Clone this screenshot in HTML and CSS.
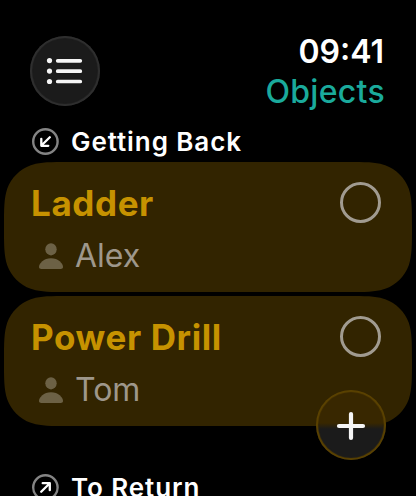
FILE: index.html
```
<!DOCTYPE html>
<html lang="en">
<head>
    <meta charset="UTF-8">
    <title>Objects</title>
    <link rel="stylesheet" href="styles.css">
</head>
<body>
    <div class="screen">
        <div class="header">
            <button class="round-btn" aria-label="Lists">
                <svg width="70" height="70" viewBox="0 0 70 70">
                    <g fill="#f5f5f5">
                        <circle cx="19.5" cy="24.6" r="2.6"/>
                        <circle cx="19.5" cy="35.1" r="2.6"/>
                        <circle cx="19.5" cy="45.5" r="2.6"/>
                    </g>
                    <path d="M27.7 24.8H50.3M27.7 35.2H50.3M27.7 45.5H50.3" stroke="#f5f5f5" stroke-width="3.7" stroke-linecap="round"/>
                </svg>
            </button>
            <div class="status">
                <div class="time">09:41</div>
                <div class="title">Objects</div>
            </div>
        </div>

        <div class="section-title">
            <svg width="27" height="27" viewBox="0 0 27 27" fill="none">
                <circle cx="13.4" cy="13.5" r="12.2" stroke="#848484" stroke-width="2.4"/>
                <path d="M17.8 9.2L9.7 17.3M9.3 10.8V17.8H16.3" stroke="#fff" stroke-width="2.3" stroke-linecap="round" stroke-linejoin="round"/>
            </svg>
            <span>Getting Back</span>
        </div>

        <div class="card">
            <div class="card-top">
                <span class="name">Ladder</span>
                <span class="check"></span>
            </div>
            <div class="person">
                <svg width="24" height="26" viewBox="0 0 24 26" fill="#6c6145">
                    <ellipse cx="12" cy="6.3" rx="5.7" ry="6.1"/>
                    <path d="M2.5 26C.8 26 0 25.3 0 24C0 20.3 4.8 15.2 12 15.2S24 20.3 24 24C24 25.3 23.2 26 21.5 26Z"/>
                </svg>
                <span>Alex</span>
            </div>
        </div>

        <div class="card">
            <div class="card-top">
                <span class="name">Power Drill</span>
                <span class="check"></span>
            </div>
            <div class="person">
                <svg width="24" height="26" viewBox="0 0 24 26" fill="#6c6145">
                    <ellipse cx="12" cy="6.3" rx="5.7" ry="6.1"/>
                    <path d="M2.5 26C.8 26 0 25.3 0 24C0 20.3 4.8 15.2 12 15.2S24 20.3 24 24C24 25.3 23.2 26 21.5 26Z"/>
                </svg>
                <span>Tom</span>
            </div>
        </div>

        <div class="section-title second">
            <svg width="27" height="27" viewBox="0 0 27 27" fill="none">
                <circle cx="13.4" cy="13.5" r="12.2" stroke="#848484" stroke-width="2.4"/>
                <path d="M9.2 17.8L17.3 9.7M10.7 9.2H17.8V16.2" stroke="#fff" stroke-width="2.3" stroke-linecap="round" stroke-linejoin="round"/>
            </svg>
            <span>To Return</span>
        </div>

        <button class="round-btn add-btn" aria-label="Add">
            <svg width="70" height="70" viewBox="0 0 70 70">
                <path d="M23 36H47M35 24V48" stroke="#f5f5f5" stroke-width="4.2" stroke-linecap="round"/>
            </svg>
        </button>
    </div>
</body>
</html>
```
FILE: styles.css
```
body {
    margin: 0;
    background: #000;
    color: #fff;
    font-family: Inter, "Liberation Sans", sans-serif;
}

.screen {
    position: relative;
    width: 416px;
    height: 496px;
    overflow: hidden;
    box-sizing: border-box;
    padding: 32px 4px 0;
}

.header {
    display: flex;
    justify-content: space-between;
    height: 96px;
    padding: 0 27px 0 26px;
}

.round-btn {
    width: 70px;
    height: 70px;
    margin-top: 4px;
    padding: 0;
    border: none;
    border-radius: 50%;
    background: #1b1b1b;
    box-shadow: inset 0 0 1px 2px #303030;
}

.round-btn svg {
    display: block;
}

.status {
    display: flex;
    flex-direction: column;
    align-items: flex-end;
    font-size: 32px;
    line-height: 40px;
    white-space: nowrap;
}

.time {
    padding-right: 1px;
    font-weight: 600;
}

.title {
    color: #1aaa9c;
    font-weight: 500;
    letter-spacing: 0.3px;
}

.section-title {
    display: flex;
    align-items: center;
    gap: 12px;
    height: 27px;
    padding: 0 28px;
    margin-bottom: 7px;
    font-size: 26px;
    font-weight: 600;
    line-height: 27px;
    letter-spacing: 0.92px;
    white-space: nowrap;
}

.second {
    margin-top: 48px;
}

.card {
    height: 130px;
    box-sizing: border-box;
    margin-bottom: 4px;
    padding: 20px 31px 0 27px;
    background: #322400;
    /* rounded rect with continuous corners, 408x130 */
    clip-path: path("M65 0H343C361.7 0 371.1 0 379.5 2.8L381.2 3.2C392.2 7.2 400.8 15.8 404.8 26.8C408 36.9 408 46.3 408 65C408 83.7 408 93.1 404.8 103.2C400.8 114.2 392.2 122.8 381.2 126.8L379.5 127.2C371.1 130 361.7 130 343 130H65C46.3 130 36.9 130 28.5 127.2L26.8 126.8C15.8 122.8 7.2 114.2 3.2 103.2C0 93.1 0 83.7 0 65C0 46.3 0 36.9 3.2 26.8C7.2 15.8 15.8 7.2 26.8 3.2L28.5 2.8C36.9 0 46.3 0 65 0Z");
}

.card-top {
    display: flex;
    justify-content: space-between;
    height: 41px;
}

.name {
    color: #c69200;
    font-size: 35px;
    font-weight: 700;
    line-height: 43px;
    letter-spacing: 0.6px;
}

.check {
    width: 41px;
    height: 41px;
    box-sizing: border-box;
    border: 3px solid #a19b90;
    border-radius: 50%;
}

.person {
    display: flex;
    align-items: center;
    gap: 12px;
    height: 42px;
    margin-top: 12px;
    padding-left: 8px;
    color: #9e978b;
    font-size: 32px;
    line-height: 42px;
}

.add-btn {
    position: absolute;
    left: 316px;
    top: 390px;
    margin: 0;
    background: linear-gradient(#382700 33px, #1b1b1b 39px);
    box-shadow: inset 0 0 1px 2px #5c4300;
}
```
